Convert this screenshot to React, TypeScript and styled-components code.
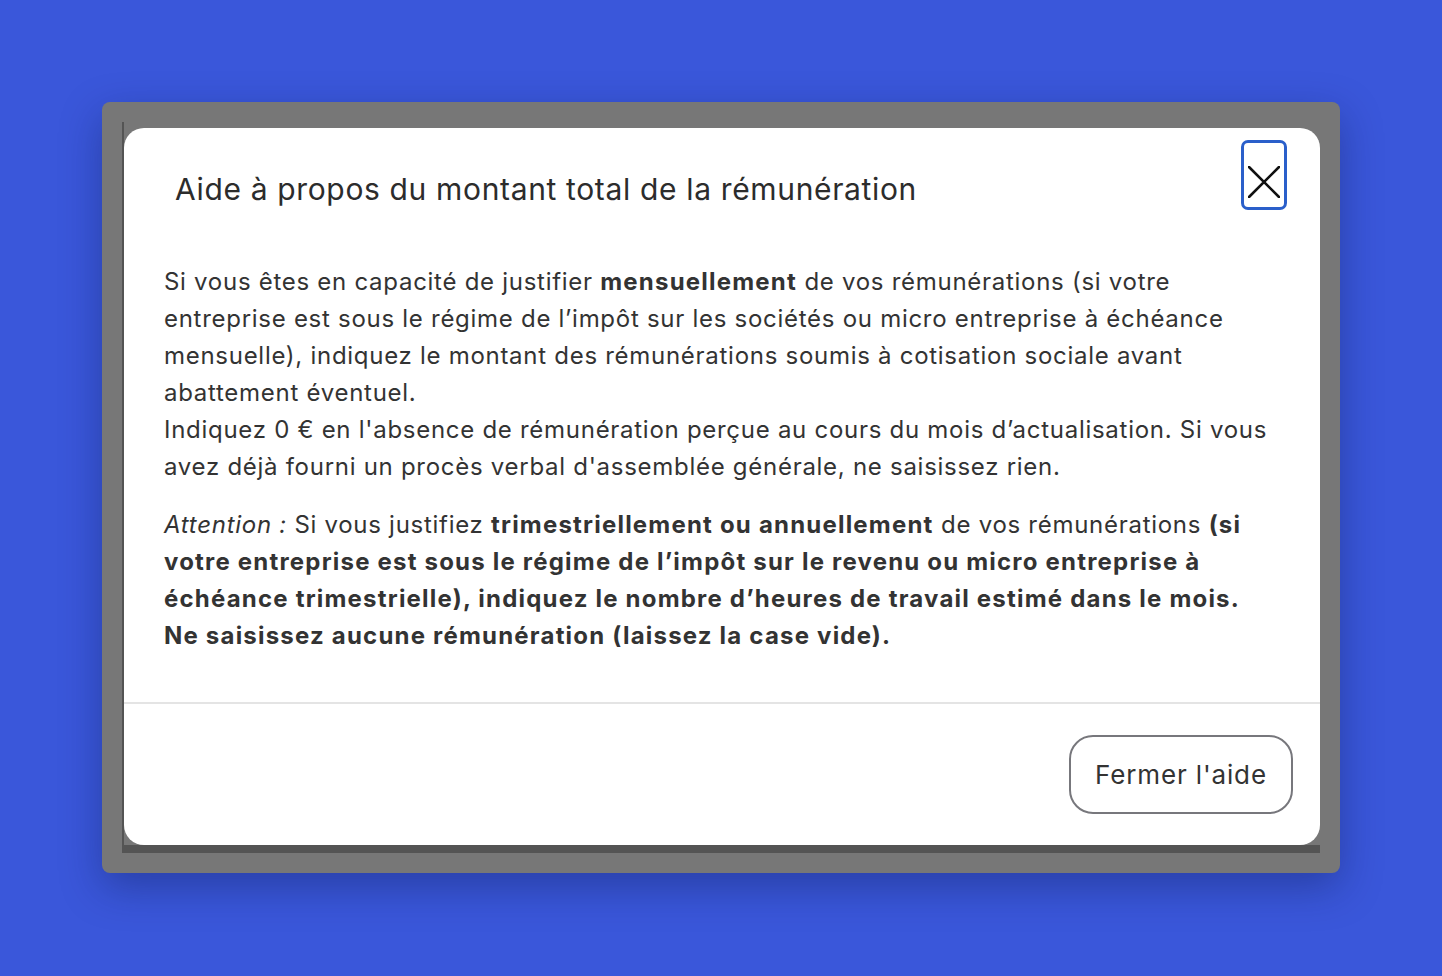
import React, { FC } from "react";
import styled, { createGlobalStyle } from "styled-components";

const GlobalStyle = createGlobalStyle`
  * {
    box-sizing: border-box;
  }

  body {
    margin: 0;
    background: #3a57da;
    font-family: Inter, "Noto Sans", "Liberation Sans", sans-serif;
    color: #333;
  }
`;

const CloseIcon: FC = () => (
  <svg width="32" height="32" viewBox="0 0 32 32" fill="none">
    <path d="M1 1 L31 31 M31 1 L1 31" stroke="#111" strokeWidth="2.6" strokeLinecap="round" />
  </svg>
);

const App: FC = () => {
  return (
    <Page>
      <GlobalStyle />
      <Frame>
        <Stage>
          <Modal role="dialog" aria-labelledby="help-title">
            <ModalHeader>
              <Title id="help-title">Aide à propos du montant total de la rémunération</Title>
              <CloseButton aria-label="Fermer">
                <CloseIcon />
              </CloseButton>
            </ModalHeader>

            <ModalBody>
              <Paragraph>
                Si vous êtes en capacité de justifier <strong>mensuellement</strong> de vos rémunérations (si votre
                <br />
                entreprise est sous le régime de l’impôt sur les sociétés ou micro entreprise à échéance
                <br />
                mensuelle), indiquez le montant des rémunérations soumis à cotisation sociale avant
                <br />
                abattement éventuel.
                <br />
                Indiquez 0 € en l'absence de rémunération perçue au cours du mois d’actualisation. Si vous
                <br />
                avez déjà fourni un procès verbal d'assemblée générale, ne saisissez rien.
              </Paragraph>
              <Paragraph>
                <em>Attention :</em> Si vous justifiez <strong>trimestriellement ou annuellement</strong> de vos
                rémunérations <strong>(si</strong>
                <br />
                <strong>
                  votre entreprise est sous le régime de l’impôt sur le revenu ou micro entreprise à
                  <br />
                  échéance trimestrielle), indiquez le nombre d’heures de travail estimé dans le mois.
                  <br />
                  Ne saisissez aucune rémunération (laissez la case vide).
                </strong>
              </Paragraph>
            </ModalBody>

            <ModalFooter>
              <SecondaryButton>Fermer l'aide</SecondaryButton>
            </ModalFooter>
          </Modal>
        </Stage>
      </Frame>
    </Page>
  );
};

export default App;

const Page = styled.div`
  width: 1442px;
  height: 976px;
  padding: 102px 0 0 102px;
  overflow: hidden;
`;

const Frame = styled.div`
  width: 1238px;
  height: 771px;
  padding: 20px;
  background: #777777;
  border-radius: 8px;
  box-shadow: 0 14px 40px rgba(10, 20, 70, 0.35);
`;

const Stage = styled.div`
  width: 100%;
  height: 100%;
  display: flex;
  padding: 6px 0 8px 2px;
  background: #777777;
  box-shadow: inset 2px -8px 0 #545454;
`;

const Modal = styled.div`
  flex: 1;
  display: flex;
  flex-direction: column;
  background: #fff;
  border-radius: 20px;
  overflow: hidden;
`;

const ModalHeader = styled.div`
  display: flex;
  justify-content: space-between;
  align-items: flex-start;
  padding: 12px 33px 0 51px;
`;

const Title = styled.h2`
  margin: 0;
  padding-top: 31px;
  font-size: 30px;
  line-height: 36px;
  font-weight: 400;
  letter-spacing: 0.65px;
  color: #2c2c2c;
`;

const CloseButton = styled.button`
  width: 46px;
  height: 70px;
  display: flex;
  align-items: center;
  justify-content: center;
  padding: 14px 0 0;
  background: #fff;
  border: 3px solid #2a5fca;
  border-radius: 7px;
  cursor: pointer;
`;

const ModalBody = styled.div`
  flex: 1;
  padding: 53px 40px 0;
`;

const Paragraph = styled.p`
  margin: 0 0 21px;
  font-size: 24px;
  line-height: 37px;
  letter-spacing: 0.72px;
  color: #333;
  white-space: nowrap;

  strong {
    font-weight: 700;
    letter-spacing: 1.2px;
  }

  em {
    font-style: italic;
  }
`;

const ModalFooter = styled.div`
  display: flex;
  justify-content: flex-end;
  padding: 31px 27px 31px;
  border-top: 2px solid #e4e4e4;
`;

const SecondaryButton = styled.button`
  width: 224px;
  height: 79px;
  padding: 0;
  background: #fff;
  border: 2px solid #77777c;
  border-radius: 24px;
  font-family: Inter, "Noto Sans", "Liberation Sans", sans-serif;
  font-size: 26px;
  letter-spacing: 0.85px;
  color: #333;
  cursor: pointer;
`;
